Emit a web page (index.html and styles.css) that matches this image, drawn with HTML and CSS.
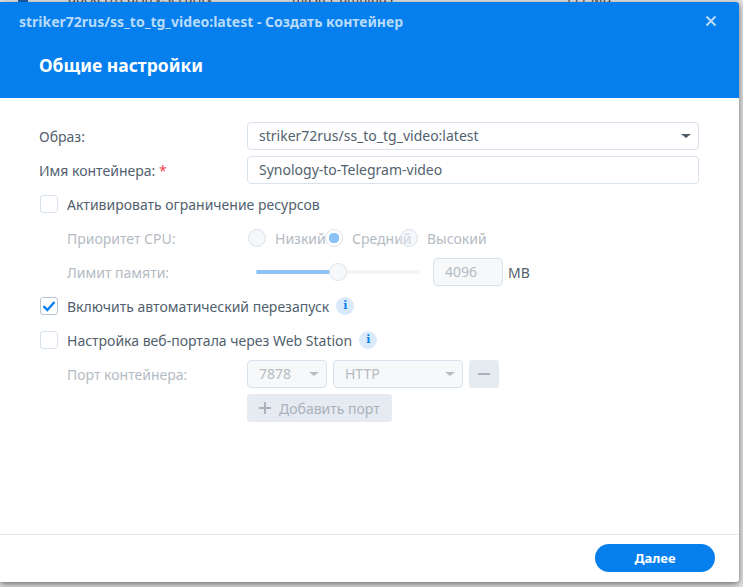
FILE: index.html
```html
<!DOCTYPE html>
<html lang="ru">
<head>
  <meta charset="UTF-8" />
  <title>Создать контейнер</title>
  <link rel="stylesheet" href="styles.css">
</head>
<body>
  <div class="behind">
    <span class="behind-check"></span>
    <span class="behind-name">docker/registry:security</span>
    <span class="behind-tag">master-omnibus</span>
    <span class="behind-size">111 MB</span>
  </div>

  <div class="dialog">
    <div class="dialog-head">
      <div class="title-bar">
        <span class="title">striker72rus/ss_to_tg_video:latest - Создать контейнер</span>
        <svg class="close" width="12" height="12" viewBox="0 0 12 12"><path d="M1.5 1.5l9 9M10.5 1.5l-9 9" stroke="#b9dbfb" stroke-width="2" fill="none"/></svg>
      </div>
      <h1>Общие настройки</h1>
    </div>

    <div class="form">
      <div class="row">
        <label class="label">Образ:</label>
        <div class="field field-wide">striker72rus/ss_to_tg_video:latest<span class="caret"></span></div>
      </div>
      <div class="row">
        <label class="label">Имя контейнера: <span class="req">*</span></label>
        <div class="field field-wide">Synology-to-Telegram-video</div>
      </div>
      <div class="row">
        <span class="check"></span>
        <span class="check-text">Активировать ограничение ресурсов</span>
      </div>
      <div class="row off">
        <label class="label sub">Приоритет CPU:</label>
        <div class="radios">
          <div class="radio-item"><span class="radio"></span>Низкий</div>
          <div class="radio-item"><span class="radio on"></span>Средний</div>
          <div class="radio-item"><span class="radio"></span>Высокий</div>
        </div>
      </div>
      <div class="row off">
        <label class="label sub">Лимит памяти:</label>
        <div class="slider">
          <div class="slider-fill"></div>
          <span class="slider-thumb"></span>
        </div>
        <div class="field field-num">4096</div>
        <span class="unit">MB</span>
      </div>
      <div class="row">
        <span class="check checked">
          <svg width="14" height="12" viewBox="0 0 14 12"><path d="M1.5 6.2l3.8 3.8L12.5 2" stroke="#057fee" stroke-width="2.4" fill="none"/></svg>
        </span>
        <span class="check-text">Включить автоматический перезапуск</span>
        <span class="info">i</span>
      </div>
      <div class="row">
        <span class="check"></span>
        <span class="check-text">Настройка веб-портала через Web Station</span>
        <span class="info">i</span>
      </div>
      <div class="row off">
        <label class="label sub">Порт контейнера:</label>
        <div class="field field-port">7878<span class="caret"></span></div>
        <div class="field field-proto">HTTP<span class="caret"></span></div>
        <div class="btn-minus"><span></span></div>
      </div>
      <div class="row off">
        <label class="label sub"></label>
        <div class="btn-add">
          <svg width="12" height="12" viewBox="0 0 12 12"><path d="M6 0v12M0 6h12" stroke="#a9b1bb" stroke-width="2" fill="none"/></svg>
          Добавить порт
        </div>
      </div>
    </div>

    <div class="dialog-foot">
      <button class="next">Далее</button>
    </div>
  </div>
</body>
</html>
```

FILE: styles.css
```css
html, body {
  height: 100%;
}
body {
  margin: 0;
  background-color: #e4e4e4;
  color: #525f6e;
  font-family: "Noto Sans", "Liberation Sans", sans-serif;
  font-size: 14px;
  overflow: hidden;
}
.behind {
  display: flex;
  align-items: flex-end;
  height: 2px;
  overflow: hidden;
  color: #444;
  font-size: 13px;
  line-height: 14px;
}
.behind span {
  flex: none;
  margin-bottom: -3px;
}
.behind-check {
  width: 10px;
  height: 10px;
  margin-left: 18px;
  background-color: #1a5fa8;
}
.behind-name {
  margin-left: 40px;
  width: 224px;
}
.behind-tag {
  width: 273px;
}
.behind-size {
  width: 60px;
}
.dialog {
  width: 739px;
  height: 580px;
  display: flex;
  flex-direction: column;
  background-color: #ffffff;
  border-radius: 0 3px 3px 0;
  box-shadow: 0 2px 7px rgba(0, 0, 0, 0.55);
  position: relative;
}
.dialog-head {
  height: 96px;
  background-color: #057fee;
  border-radius: 0 3px 0 0;
}
.title-bar {
  display: flex;
  align-items: center;
  justify-content: space-between;
  height: 38px;
  padding: 0 22px 0 19px;
}
.title {
  color: #b9dbfb;
  font-size: 14px;
  font-weight: 700;
}
h1 {
  margin: 13px 0 0 39px;
  color: #ffffff;
  font-size: 17.5px;
  font-weight: 700;
  line-height: 24px;
}
.form {
  flex: 1;
  display: flex;
  flex-direction: column;
  gap: 6px;
  padding: 24px 40px 0 39px;
}
.row {
  display: flex;
  align-items: center;
  height: 28px;
  flex: none;
}
.label {
  width: 208px;
  flex: none;
}
.label.sub {
  padding-left: 28px;
  width: 180px;
}
.req {
  color: #f2484f;
}
.off .label {
  color: #b4bbc3;
}
.field {
  position: relative;
  box-sizing: border-box;
  height: 28px;
  line-height: 26px;
  padding: 0 11px;
  border: 1px solid #d8e2ec;
  border-radius: 4px;
  background-color: #ffffff;
}
.field-wide {
  width: 452px;
}
.off .field {
  background-color: #f6f8fa;
  color: #b4bbc3;
}
.field-num {
  width: 70px;
  margin-left: 13px;
}
.field-port {
  width: 80px;
}
.field-proto {
  width: 130px;
  margin-left: 6px;
}
.caret {
  position: absolute;
  right: 7px;
  top: 11px;
  width: 0;
  height: 0;
  border-left: 5px solid transparent;
  border-right: 5px solid transparent;
  border-top: 4px solid #4d5a68;
}
.off .caret {
  border-top-color: #b4bbc3;
}
.check {
  box-sizing: border-box;
  flex: none;
  width: 18px;
  height: 18px;
  margin: 0 9px 0 1px;
  border: 1px solid #d8e2ec;
  border-radius: 3px;
  display: flex;
  align-items: center;
  justify-content: center;
}
.check.checked {
  border-color: #b8c4d0;
}
.info {
  flex: none;
  width: 18px;
  height: 18px;
  margin-left: 7px;
  border-radius: 50%;
  background-color: #d9eafb;
  color: #057fee;
  font-family: "DejaVu Serif", serif;
  font-size: 11px;
  font-weight: 700;
  line-height: 18px;
  text-align: center;
}
.radios {
  display: grid;
  grid-template-columns: 77px 75px 76px;
  margin-left: 1px;
  color: #b4bbc3;
}
.radio-item {
  display: flex;
  align-items: center;
  white-space: nowrap;
}
.radio {
  box-sizing: border-box;
  flex: none;
  width: 18px;
  height: 18px;
  margin-right: 9px;
  border: 1px solid #dbe3ec;
  border-radius: 50%;
  background-color: rgba(236, 240, 245, 0.5);
  position: relative;
}
.radio.on {
  background-color: #ffffff;
  background-image: radial-gradient(circle, #8cc1f5 0, #8cc1f5 5px, transparent 5.5px);
}
.slider {
  position: relative;
  width: 164px;
  height: 4px;
  margin-left: 9px;
  border-radius: 2px;
  background-color: #f3f5f7;
}
.slider-fill {
  width: 76px;
  height: 4px;
  border-radius: 2px;
  background-color: #8cc1f5;
}
.slider-thumb {
  position: absolute;
  left: 73px;
  top: -7px;
  box-sizing: border-box;
  width: 18px;
  height: 18px;
  border: 1px solid #dbe3ec;
  border-radius: 50%;
  background-color: #f6f8fa;
}
.unit {
  margin-left: 5px;
}
.btn-minus {
  width: 30px;
  height: 28px;
  margin-left: 6px;
  border-radius: 3px;
  background-color: #e6ebf2;
  display: flex;
  align-items: center;
  justify-content: center;
}
.btn-minus span {
  width: 12px;
  height: 2px;
  background-color: #a9b1bb;
}
.btn-add {
  display: flex;
  align-items: center;
  gap: 8px;
  box-sizing: border-box;
  width: 145px;
  height: 28px;
  padding-left: 12px;
  border-radius: 3px;
  background-color: #e6ebf2;
  color: #a9b1bb;
}
.dialog-foot {
  flex: none;
  box-sizing: border-box;
  height: 48px;
  border-top: 1px solid #e6e8ea;
  display: flex;
  justify-content: flex-end;
  padding: 9px 24px 0 0;
}
.next {
  width: 120px;
  height: 28px;
  border: none;
  border-radius: 14px;
  background-color: #057fee;
  color: #ffffff;
  font-family: inherit;
  font-size: 13px;
  font-weight: 700;
}
```
